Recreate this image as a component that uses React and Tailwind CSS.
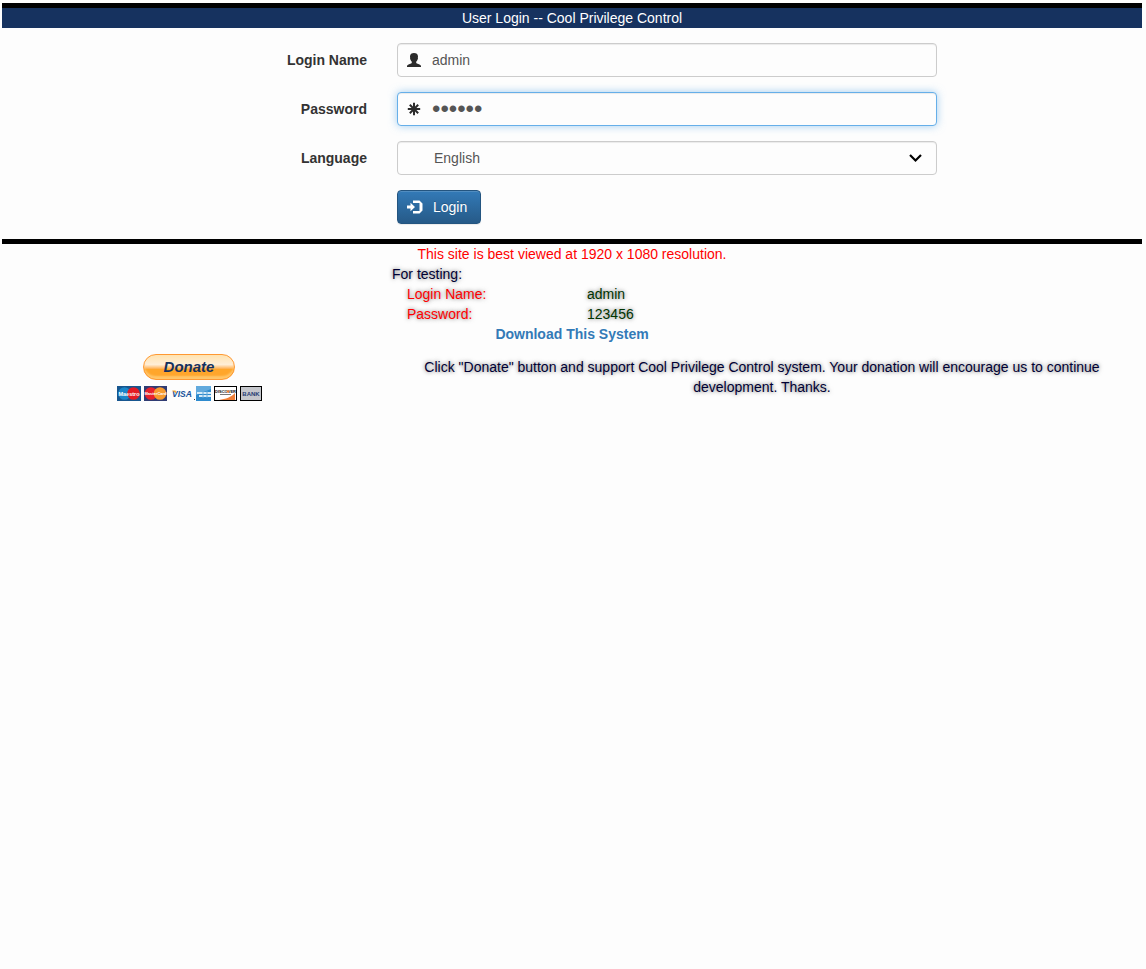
import React from "react";

const SHADOW = "[text-shadow:0_0_4px_rgba(0,0,0,0.6)]";
const CONTROL =
  "block h-[34px] w-full rounded-[4px] border bg-[#fdfdfd] pr-3 leading-5 text-[#555] outline-none";

function UserIcon() {
  return (
    <svg width="14" height="14" viewBox="0 0 14 14" fill="#2b2b2b" aria-hidden="true">
      <path d="M7 0C4.700 0 3 1.200 3 3.400c0 .6.1 1.100.2 1.600-.3.300-.2 1 .2 1.500.3 1 .8 1.700 1.400 2.300v1c-.3.600-1.100.8-2.100 1.100C1 11.400 0 12 0 13.200V14h14v-.8c0-1.200-1-1.800-2.700-2.300-1-.3-1.800-.5-2.100-1.100v-1c.6-.6 1.100-1.300 1.400-2.300.4-.5.5-1.200.2-1.500.1-.5.2-1 .2-1.600C11 1.200 9.300 0 7 0z" />
    </svg>
  );
}

function AsteriskIcon() {
  return (
    <svg width="14" height="14" viewBox="0 0 14 14" stroke="#2b2b2b" strokeWidth="2" aria-hidden="true">
      <path d="M7 .8v12.400M.8 7h12.400M2.800 2.800l8.400 8.400M11.200 2.800l-8.400 8.400" />
    </svg>
  );
}

function LoginIcon() {
  return (
    <svg width="16" height="14" viewBox="0 0 16 14" fill="#fff" aria-hidden="true">
      <path d="M0 5.500h3.500V2.800L8 7l-4.500 4.200V8.500H0z" />
      <path d="M6 .5h6.500L15.500 3.500v7l-3 3H6V11h6.500V3H6z" />
    </svg>
  );
}

function Field({ id, label, children }) {
  return (
    <div className="grid grid-cols-12">
      <label
        htmlFor={id}
        className="col-span-4 px-[15px] pt-[7px] text-right font-bold text-[#333]"
      >
        {label}
      </label>
      <div className="col-span-6 px-[15px]">
        <div className="relative">{children}</div>
      </div>
    </div>
  );
}

function Cards() {
  return (
    <svg className="overflow-visible" width="144" height="15" viewBox="0 0 144 15" role="img" aria-label="Accepted cards" fontFamily="Liberation Sans, sans-serif" fontWeight="bold">
      <rect width="24" height="15" fill="#17568f" />
      <circle cx="7.500" cy="7.500" r="6.300" fill="#1b86c9" />
      <circle cx="16.500" cy="7.500" r="6.300" fill="#e31b23" />
      <text x="12" y="9.500" fontSize="5.500" fill="#fff" textAnchor="middle">Maestro</text>
      <rect x="27" width="23" height="15" fill="#303c73" />
      <circle cx="34" cy="7.500" r="6.300" fill="#e8212b" />
      <circle cx="43" cy="7.500" r="6.300" fill="#f79b2f" />
      <text x="38.500" y="9" fontSize="4" fill="#fff" textAnchor="middle">MasterCard</text>
      <text x="65" y="11" fontSize="8.500" fontStyle="italic" fill="#17529a" textAnchor="middle">VISA</text>
      <path d="M55 4.500h3.500l1 3z" fill="#f3a52c" />
      <path d="M77 13h1v1h-1z" fill="#444" />
      <rect x="79" width="15" height="15" fill="#2f8bce" />
      <path d="M79 0h15v3L79 9z" fill="#62aadd" />
      <path d="M80 6h14v2H80zM82 9h12v2H82z" fill="#d5ebf8" />
      <path d="M86 5v7M90 5v7" stroke="#63a8d8" strokeWidth="1" />
      <rect x="98" y="1" width="21" height="13" fill="#fff" />
      <path d="M118 7v7h-16c7-1 12-3 16-7z" fill="#f08038" />
      <rect x="97.500" y=".5" width="22" height="14" fill="none" stroke="#000" />
      <text x="108.500" y="7" fontSize="4" fill="#111" textAnchor="middle">DISCOVER</text>
      <circle cx="111" cy="5.500" r="1.200" fill="#f08038" />
      <path d="M103 8.500h11" stroke="#777" strokeWidth="1" />
      <rect x="123.500" y=".5" width="21" height="14" fill="#c4c6cb" stroke="#000" />
      <text x="134" y="9.500" fontSize="6" fill="#263c73" textAnchor="middle">BANK</text>
    </svg>
  );
}

export default function App() {
  return (
    <div className="min-h-screen bg-[#fdfdfd] pt-[3px] pr-1 pl-[2px] font-['Liberation_Sans',Arial,sans-serif] text-[14px] leading-5">
      <header className="border-t-[5px] border-black bg-[#16325f] text-center text-white">
        <h1>User Login -- Cool Privilege Control</h1>
      </header>

      <form
        className="flex flex-col gap-[15px] border-b-[5px] border-black py-[15px]"
        onSubmit={(e) => e.preventDefault()}
      >
        <Field id="login-name" label="Login Name">
          <input
            id="login-name"
            type="text"
            defaultValue="admin"
            className={`${CONTROL} border-[#ccc] pl-[34px] shadow-[inset_0_1px_1px_rgba(0,0,0,0.075)]`}
          />
          <span className="pointer-events-none absolute inset-y-0 left-[10px] flex items-center">
            <UserIcon />
          </span>
        </Field>
        <Field id="password" label="Password">
          <input
            id="password"
            type="password"
            defaultValue="123456"
            className={`${CONTROL} border-[#66afe9] pl-[34px] text-[24px] shadow-[inset_0_1px_1px_rgba(0,0,0,0.075),0_0_8px_rgba(102,175,233,0.6)]`}
          />
          <span className="pointer-events-none absolute inset-y-0 left-[10px] flex items-center">
            <AsteriskIcon />
          </span>
        </Field>
        <Field id="language" label="Language">
          <select
            id="language"
            defaultValue="en"
            className={`${CONTROL} appearance-none border-[#ccc] pl-9 shadow-[inset_0_1px_1px_rgba(0,0,0,0.075)]`}
          >
            <option value="en">English</option>
          </select>
          <span className="pointer-events-none absolute inset-y-0 right-[15px] flex items-center">
            <svg width="13" height="9" viewBox="0 0 13 9" fill="none" stroke="#000" strokeWidth="2.200" aria-hidden="true">
              <path d="M1 1l5.500 5.500L12 1" />
            </svg>
          </span>
        </Field>
        <div className="grid grid-cols-12">
          <div className="col-span-6 col-start-5 px-[15px]">
            <button
              type="submit"
              className="flex h-[34px] items-center gap-[10px] rounded-[4px] border border-[#245580] bg-linear-to-b from-[#337ab7] to-[#265a88] pr-[13px] pl-[9px] text-white shadow-[inset_0_1px_0_rgba(255,255,255,0.15),0_1px_1px_rgba(0,0,0,0.075)] [text-shadow:0_-1px_0_rgba(0,0,0,0.2)]"
            >
              <LoginIcon />
              Login
            </button>
          </div>
        </div>
      </form>

      <main>
        <p className="text-center text-[#f00]">This site is best viewed at 1920 x 1080 resolution.</p>
        <section className={`mx-auto w-[360px] ${SHADOW}`}>
          <p className="text-[#003]">For testing:</p>
          <dl className="grid grid-cols-2">
            <dt className="px-[15px] text-[#f00]">Login Name:</dt>
            <dd className="px-[15px] text-[#030]">admin</dd>
            <dt className="px-[15px] text-[#f00]">Password:</dt>
            <dd className="px-[15px] text-[#030]">123456</dd>
          </dl>
        </section>
        <p className="text-center">
          <a href="#download" className="font-bold text-[#337ab7]">Download This System</a>
        </p>

        <section className="grid grid-cols-12 pt-[10px]">
          <div className="col-span-4 flex flex-col items-center gap-[6px] pr-[6px]">
            <button
              type="button"
              className="h-[26px] w-[92px] rounded-full border border-[#ff9933] bg-linear-to-b from-[#ffe3b0] via-[#ffeed6] via-40% to-[#ffa62b] to-60% text-[15px] leading-5 font-bold text-[#14315f] italic shadow-[inset_0_-3px_2px_rgba(255,205,120,0.8)]"
            >
              Donate
            </button>
            <Cards />
          </div>
          <p className={`col-span-8 px-[15px] pt-[3px] text-center text-[#003] ${SHADOW}`}>
            Click "Donate" button and support Cool Privilege Control system. Your donation will encourage us to continue development. Thanks.
          </p>
        </section>
      </main>
    </div>
  );
}
